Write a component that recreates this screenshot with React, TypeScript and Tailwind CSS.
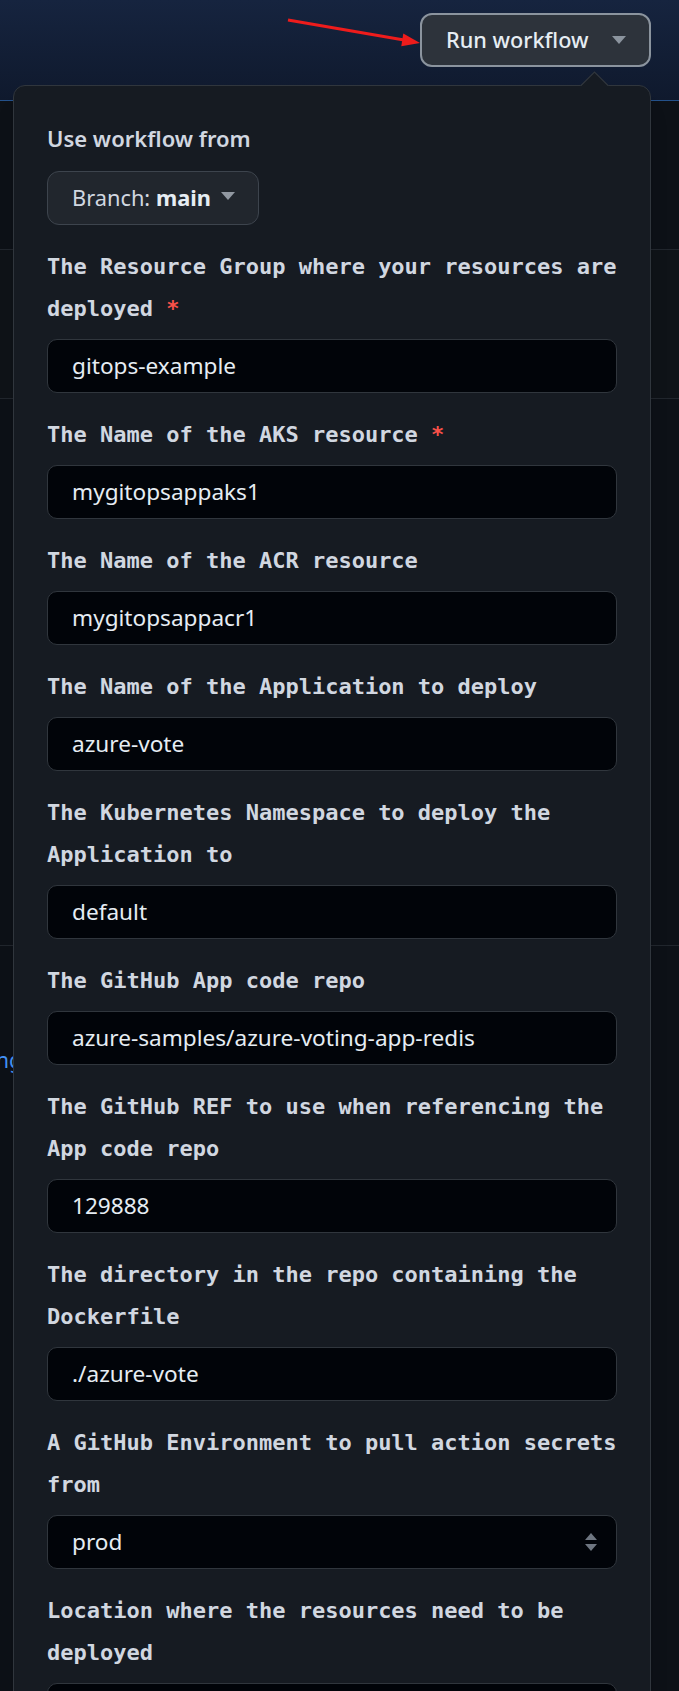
import type { ReactNode } from "react";

type Field = {
  label: string;
  value: string;
  required?: boolean;
  select?: boolean;
};

const FIELDS: Field[] = [
  { label: "The Resource Group where your resources are deployed", value: "gitops-example", required: true },
  { label: "The Name of the AKS resource", value: "mygitopsappaks1", required: true },
  { label: "The Name of the ACR resource", value: "mygitopsappacr1" },
  { label: "The Name of the Application to deploy", value: "azure-vote" },
  { label: "The Kubernetes Namespace to deploy the Application to", value: "default" },
  { label: "The GitHub App code repo", value: "azure-samples/azure-voting-app-redis" },
  { label: "The GitHub REF to use when referencing the App code repo", value: "129888" },
  { label: "The directory in the repo containing the Dockerfile", value: "./azure-vote" },
  { label: "A GitHub Environment to pull action secrets from", value: "prod", select: true },
  { label: "Location where the resources need to be deployed", value: "" },
];

const uiFont = "font-['Noto_Sans','Open_Sans',sans-serif]";

function Caret({ className }: { className?: string }) {
  return (
    <svg width="14" height="8" viewBox="0 0 14 8" className={className}>
      <path d="M0 0h14L7 8z" fill="currentColor" />
    </svg>
  );
}

function SelectArrows() {
  return (
    <svg width="14" height="20" viewBox="0 0 14 20" className="text-[#6e7681]">
      <path d="M7 1l6 7H1z" fill="currentColor" />
      <path d="M1 12h12l-6 7z" fill="currentColor" />
    </svg>
  );
}

function FormField({ field }: { field: Field }) {
  return (
    <div className="mt-[21px]">
      <label className="block mb-[9px] font-['DejaVu_Sans_Mono','Liberation_Mono',monospace] font-bold text-[22px] leading-[42px] text-[#d1d7e0]">
        {field.required ? `${field.label}\u00a0` : field.label}
        {field.required && <span className="text-[#f85149]">*</span>}
      </label>
      <div className="flex h-[54px] items-center justify-between rounded-[10px] border border-[#30363d] bg-[#010409] pl-[24px] pr-[18px]">
        <span className={`${uiFont} text-[22.6px] text-[#e6edf3]`}>{field.value}</span>
        {field.select && <SelectArrows />}
      </div>
    </div>
  );
}

function Popover({ children }: { children: ReactNode }) {
  return (
    <div className="absolute left-[13px] top-[85px] w-[638px] h-[1640px] rounded-[12px] border border-[#30363d] bg-[#161b22] px-[33px] pt-[37px] shadow-xl">
      <svg width="29" height="15" viewBox="0 0 29 15" className="absolute left-[566px] top-[-15px]">
        <path d="M0 15L14.5 0.7L29 15z" fill="#161b22" />
        <path d="M0.5 15L14.5 1L28.5 15" fill="none" stroke="#30363d" strokeWidth="1.2" />
      </svg>
      {children}
    </div>
  );
}

export default function App() {
  return (
    <div className={`relative min-h-[1691px] overflow-hidden bg-[#0d1117] ${uiFont}`}>
      <header className="relative flex h-[101px] items-start justify-end border-b border-[#24518a] bg-linear-to-b from-[#16243f] to-[#0f192d] pr-[28px] pt-[13px]">
        <svg width="680" height="100" className="absolute left-0 top-0 pointer-events-none">
          <line x1="288" y1="20" x2="404" y2="40" stroke="#ee1c1c" strokeWidth="3.2" />
          <path d="M420 43L403.3 33.6L401.3 46.2z" fill="#ee1c1c" />
        </svg>
        <button
          type="button"
          className="flex h-[54px] w-[231px] items-center justify-between rounded-[12px] border-2 border-[#8b949e] bg-[#2d333b] pl-[24px] pr-[23px] text-[21.7px] font-medium text-[#e6edf3]"
        >
          Run workflow
          <Caret className="text-[#8b949e]" />
        </button>
      </header>

      <div className="h-[149px] border-b border-[#21262d]" />
      <div className="h-[149px] border-b border-[#21262d] bg-[#0f1318]" />
      <div className="h-[547px] border-b border-[#21262d]" />
      <div className="pt-[99px] text-[21px] text-[#4493f8]">
        <span className="-ml-[4px]">ng</span>
      </div>

      <Popover>
        <div className="text-[22px] leading-[30px] font-semibold text-[#d1d7e0]">Use workflow from</div>
        <button
          type="button"
          className="mt-[18px] flex h-[54px] w-[212px] items-center rounded-[12px] border border-[#3d444d] bg-[#21262d] pl-[24px] text-[21.8px] text-[#d1d7e0]"
        >
          Branch:&nbsp;<span className="font-bold text-[#e6edf3]">main</span>
          <Caret className="ml-[10px] -mt-[4px] text-[#9198a1]" />
        </button>
        {FIELDS.map((f) => (
          <FormField key={f.label} field={f} />
        ))}
      </Popover>
    </div>
  );
}
